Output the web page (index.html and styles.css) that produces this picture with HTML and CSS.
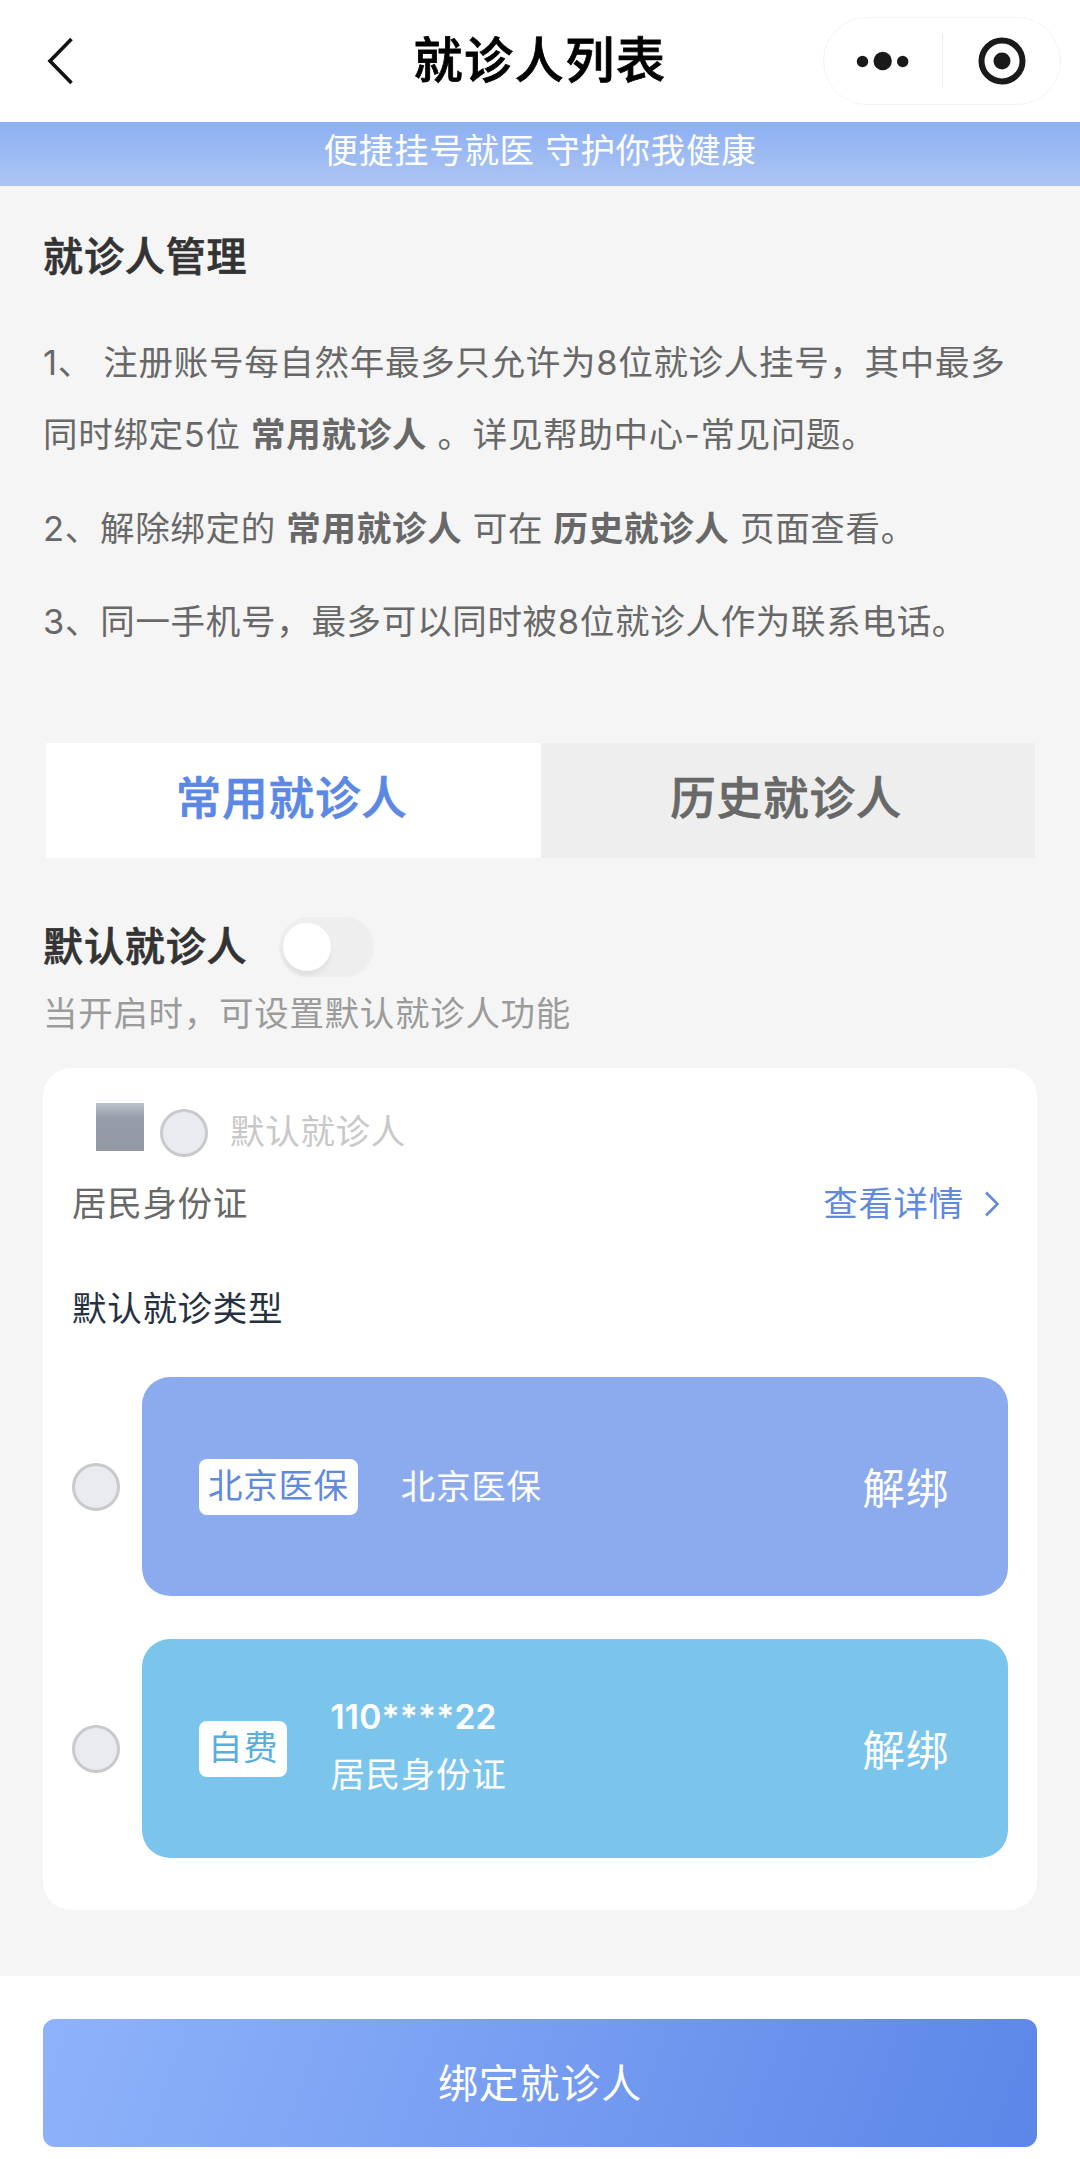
FILE: index.html
```html
<!DOCTYPE html>
<html lang="zh-CN">
<head>
    <meta charset="UTF-8">
    <meta name="viewport" content="width=device-width, initial-scale=1.0">
    <title>就诊人列表</title>
    <link rel="stylesheet" href="styles.css">
</head>
<body>
    <header class="navbar">
        <svg class="back" width="30" height="50" viewBox="0 0 30 50">
            <path d="M26.500 3 L5 25 L26.500 47" fill="none" stroke="#111" stroke-width="3.600"/>
        </svg>
        <h1>就诊人列表</h1>
        <div class="capsule">
            <svg class="more" width="54" height="20" viewBox="0 0 54 20">
                <circle cx="6.500" cy="10.500" r="5.700"/>
                <circle cx="26.700" cy="10" r="9.200"/>
                <circle cx="46.700" cy="10.500" r="5.700"/>
            </svg>
            <span class="capsule-line"></span>
            <svg class="close" width="48" height="48" viewBox="0 0 48 48">
                <circle cx="24" cy="24" r="20.500" fill="none" stroke="#1a1a1a" stroke-width="6"/>
                <circle cx="24" cy="24" r="8.500"/>
            </svg>
        </div>
    </header>

    <div class="banner">便捷挂号就医 守护你我健康</div>

    <main class="content">
        <h2>就诊人管理</h2>
        <div class="rules">
            <p>1、 注册账号每自然年最多只允许为8位就诊人挂号，其中最多同时绑定5位 <b>常用就诊人</b> 。详见帮助中心-常见问题。</p>
            <p>2、解除绑定的 <b>常用就诊人</b> 可在 <b>历史就诊人</b> 页面查看。</p>
            <p>3、同一手机号，最多可以同时被8位就诊人作为联系电话。</p>
        </div>

        <div class="tabs">
            <div class="tab active">常用就诊人</div>
            <div class="tab">历史就诊人</div>
        </div>

        <div class="default-row">
            <h2>默认就诊人</h2>
            <div class="switch"><span class="knob"></span></div>
        </div>
        <p class="hint">当开启时，可设置默认就诊人功能</p>

        <section class="card">
            <div class="person">
                <span class="mask"></span>
                <span class="radio"></span>
                <span class="person-label">默认就诊人</span>
            </div>
            <div class="id-row">
                <span>居民身份证</span>
                <a class="detail">查看详情
                    <svg width="16" height="28" viewBox="0 0 16 28">
                        <path d="M2 2.500 L13.500 14 L2 25.500" fill="none" stroke="#6189dc" stroke-width="2.600"/>
                    </svg>
                </a>
            </div>
            <h3>默认就诊类型</h3>

            <div class="type-row">
                <span class="radio"></span>
                <div class="type-card insurance">
                    <span class="tag">北京医保</span>
                    <div class="info"><span>北京医保</span></div>
                    <span class="unbind">解绑</span>
                </div>
            </div>
            <div class="type-row">
                <span class="radio"></span>
                <div class="type-card self-pay">
                    <span class="tag">自费</span>
                    <div class="info">
                        <span class="number">110****22</span>
                        <span>居民身份证</span>
                    </div>
                    <span class="unbind">解绑</span>
                </div>
            </div>
        </section>
    </main>

    <footer class="footer">
        <button class="bind-button">绑定就诊人</button>
    </footer>
</body>
</html>
```
FILE: styles.css
```css
* {
    margin: 0;
    padding: 0;
    box-sizing: border-box;
}

body {
    width: 1080px;
    height: 2159px;
    display: flex;
    flex-direction: column;
    background-color: #f5f5f5;
    font-family: Inter, "Noto Sans CJK SC", sans-serif;
    font-size: 34.5px;
    letter-spacing: 0.7px;
    color: #686868;
    overflow: hidden;
}

svg {
    display: block;
    flex-shrink: 0;
}

/* top bar */
.navbar {
    height: 122px;
    flex-shrink: 0;
    display: grid;
    grid-template-columns: 257px 1fr 257px;
    align-items: center;
    background-color: #fff;
}

.back {
    margin-left: 45px;
}

.navbar h1 {
    text-align: center;
    font-size: 49px;
    letter-spacing: 1.6px;
    line-height: 60px;
    font-weight: 500;
    color: #000;
    -webkit-text-stroke: 0.8px #000;
}

.capsule {
    width: 238px;
    height: 88px;
    border: 1px solid #f4f4f4;
    border-radius: 44px;
    display: flex;
    align-items: center;
    padding: 0 34px 0 32px;
    justify-content: space-between;
    fill: #1a1a1a;
}

.capsule-line {
    width: 1px;
    height: 54px;
    margin-left: -4px;
    background-color: #ebebeb;
}

.banner {
    height: 64px;
    flex-shrink: 0;
    text-align: center;
    line-height: 58px;
    color: #fff;
    background: linear-gradient(#8cb0f3, #adc5f3);
}

.content {
    flex: 1;
    padding: 41px 43px 0;
}

h2 {
    font-size: 40px;
    letter-spacing: 0.9px;
    line-height: 60px;
    font-weight: 500;
    color: #333;
    -webkit-text-stroke: 0.7px #333;
}

.rules {
    margin-top: 40px;
}

.rules p {
    line-height: 72px;
    margin-bottom: 21.5px;
}

/* tabs */
.tabs {
    display: flex;
    height: 115px;
    margin: 85px 2px 0 3px;
}

.tab {
    flex: 1;
    text-align: center;
    font-size: 45.5px;
    letter-spacing: 0.9px;
    padding-right: 3px;
    font-weight: 500;
    line-height: 111px;
    background-color: #eee;
    -webkit-text-stroke: 0.7px currentColor;
}

.tab.active {
    background-color: #fff;
    color: #5b87e5;
}

/* default switch */
.default-row {
    display: flex;
    align-items: center;
    margin-top: 59px;
}

.switch {
    width: 95px;
    height: 60px;
    margin-left: 31px;
    padding: 6px 4px;
    border-radius: 30px;
    background-color: #eee;
}

.knob {
    display: block;
    width: 48px;
    height: 48px;
    border-radius: 50%;
    background-color: #fff;
    box-shadow: 0 5px 5px rgba(0, 0, 0, 0.06);
}

.hint {
    line-height: 50px;
    margin-top: 12px;
    color: #9b9b9b;
}

/* patient card */
.card {
    height: 842px;
    margin-top: 29px;
    padding: 35px 29px 0;
    border-radius: 28px;
    background-color: #fff;
}

.person {
    display: flex;
    height: 54px;
    margin-left: 24px;
}

.mask {
    width: 48px;
    height: 48px;
    margin-right: 16px;
    background: linear-gradient(#bcc2ca, #979eaa 30%, #9299a5);
}

.radio {
    width: 48px;
    height: 48px;
    flex-shrink: 0;
    border: 3px solid #c9cacc;
    border-radius: 50%;
    background-color: #e9ebf0;
}

.person .radio {
    margin-top: 6px;
}

.person-label {
    margin-left: 22px;
    line-height: 57px;
    color: #c8c8c8;
}

.id-row {
    display: flex;
    justify-content: space-between;
    height: 50px;
    margin-top: 22px;
    line-height: 50px;
}

.detail {
    display: flex;
    align-items: center;
    gap: 20px;
    margin-right: 8px;
    color: #6189dc;
}

h3 {
    margin-top: 55px;
    font-size: 34.5px;
    font-weight: 400;
    line-height: 50px;
    color: #26303f;
}

.type-row {
    display: flex;
    align-items: center;
    gap: 22px;
    margin-top: 43px;
}

.type-card {
    flex: 1;
    height: 219px;
    display: flex;
    align-items: center;
    padding: 0 59px 0 57px;
    border-radius: 28px;
    color: #fff;
}

.insurance {
    background-color: #8cabee;
}

.self-pay {
    background-color: #7bc5ed;
}

.tag {
    height: 56px;
    padding: 0 9px;
    border-radius: 8px;
    line-height: 54px;
    background-color: #fff;
    color: #6189dc;
}

.self-pay .tag {
    color: #5aaedb;
}

.info {
    display: flex;
    flex-direction: column;
    flex: 1;
    margin-left: 43px;
    line-height: 58px;
}

.self-pay .info {
    padding-bottom: 5px;
}

.number {
    font-size: 33.5px;
    letter-spacing: 0.2px;
    font-weight: 600;
}

.unbind {
    font-size: 42.5px;
    padding-bottom: 2px;
}

/* bottom bar */
.footer {
    height: 183px;
    flex-shrink: 0;
    padding: 43px 43px 0;
    background-color: #fff;
}

.bind-button {
    display: block;
    width: 100%;
    height: 128px;
    padding-bottom: 5px;
    border: none;
    border-radius: 12px;
    font-family: inherit;
    font-size: 40px;
    letter-spacing: 0.8px;
    color: #fff;
    background: linear-gradient(110deg, #8fb3fa, #5c86e8);
}
```
